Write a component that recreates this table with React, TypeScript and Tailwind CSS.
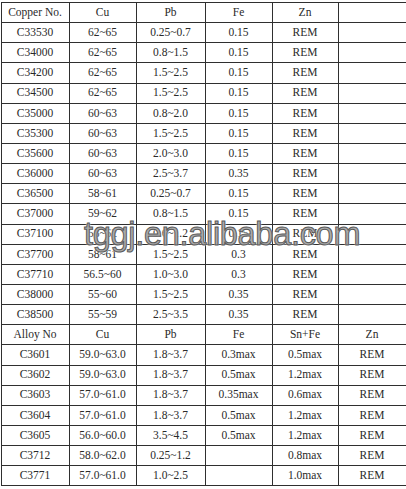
const upper: string[][] = [
  ['C33530', '62~65', '0.25~0.7', '0.15', 'REM', ''],
  ['C34000', '62~65', '0.8~1.5', '0.15', 'REM', ''],
  ['C34200', '62~65', '1.5~2.5', '0.15', 'REM', ''],
  ['C34500', '62~65', '1.5~2.5', '0.15', 'REM', ''],
  ['C35000', '60~63', '0.8~2.0', '0.15', 'REM', ''],
  ['C35300', '60~63', '1.5~2.5', '0.15', 'REM', ''],
  ['C35600', '60~63', '2.0~3.0', '0.15', 'REM', ''],
  ['C36000', '60~63', '2.5~3.7', '0.35', 'REM', ''],
  ['C36500', '58~61', '0.25~0.7', '0.15', 'REM', ''],
  ['C37000', '59~62', '0.8~1.5', '0.15', 'REM', ''],
  ['C37100', '58~62', '0.6~1.2', '0.15', 'REM', ''],
  ['C37700', '58~61', '1.5~2.5', '0.3', 'REM', ''],
  ['C37710', '56.5~60', '1.0~3.0', '0.3', 'REM', ''],
  ['C38000', '55~60', '1.5~2.5', '0.35', 'REM', ''],
  ['C38500', '55~59', '2.5~3.5', '0.35', 'REM', ''],
];

const lower: string[][] = [
  ['C3601', '59.0~63.0', '1.8~3.7', '0.3max', '0.5max', 'REM'],
  ['C3602', '59.0~63.0', '1.8~3.7', '0.5max', '1.2max', 'REM'],
  ['C3603', '57.0~61.0', '1.8~3.7', '0.35max', '0.6max', 'REM'],
  ['C3604', '57.0~61.0', '1.8~3.7', '0.5max', '1.2max', 'REM'],
  ['C3605', '56.0~60.0', '3.5~4.5', '0.5max', '1.2max', 'REM'],
  ['C3712', '58.0~62.0', '0.25~1.2', '', '0.8max', 'REM'],
  ['C3771', '57.0~61.0', '1.0~2.5', '', '1.0max', 'REM'],
];

const cellCls = 'border-[1.5px] border-[#2f2f2f] p-0 text-center align-middle leading-none';

function Row({ cells }: { cells: string[] }) {
  return (
    <tr className="h-[20.15px]">
      {cells.map((c, i) => (
        <td key={i} className={cellCls}>
          {c}
        </td>
      ))}
    </tr>
  );
}

export default function App() {
  return (
    <div className="relative w-[406px] h-[489px] bg-white overflow-hidden pt-[2px] pl-[0.5px]">
      <table className="border-collapse table-fixed w-[405px] font-['Liberation_Serif','Times_New_Roman',serif] text-[11.5px] text-[#2a2a2a]">
        <colgroup>
          <col className="w-[68px]" />
          <col className="w-[67px]" />
          <col className="w-[69px]" />
          <col className="w-[67px]" />
          <col className="w-[66px]" />
          <col className="w-[68px]" />
        </colgroup>
        <tbody>
          <Row cells={['Copper No.', 'Cu', 'Pb', 'Fe', 'Zn', '']} />
          {upper.map((r) => (
            <Row key={r[0]} cells={r} />
          ))}
          <Row cells={['Alloy No', 'Cu', 'Pb', 'Fe', 'Sn+Fe', 'Zn']} />
          {lower.map((r) => (
            <Row key={r[0]} cells={r} />
          ))}
        </tbody>
      </table>
      {/* watermark */}
      <div className="absolute left-[84px] top-[218px] font-['Liberation_Sans',Arial,sans-serif] text-[32.5px] leading-none tracking-[-0.3px] text-[#ababab] [-webkit-text-stroke:1px_#5a5a5a] [text-shadow:0_0_2px_#ffffff,0_0_2px_#ffffff] pointer-events-none">
        tggj.en.alibaba.com
      </div>
    </div>
  );
}
